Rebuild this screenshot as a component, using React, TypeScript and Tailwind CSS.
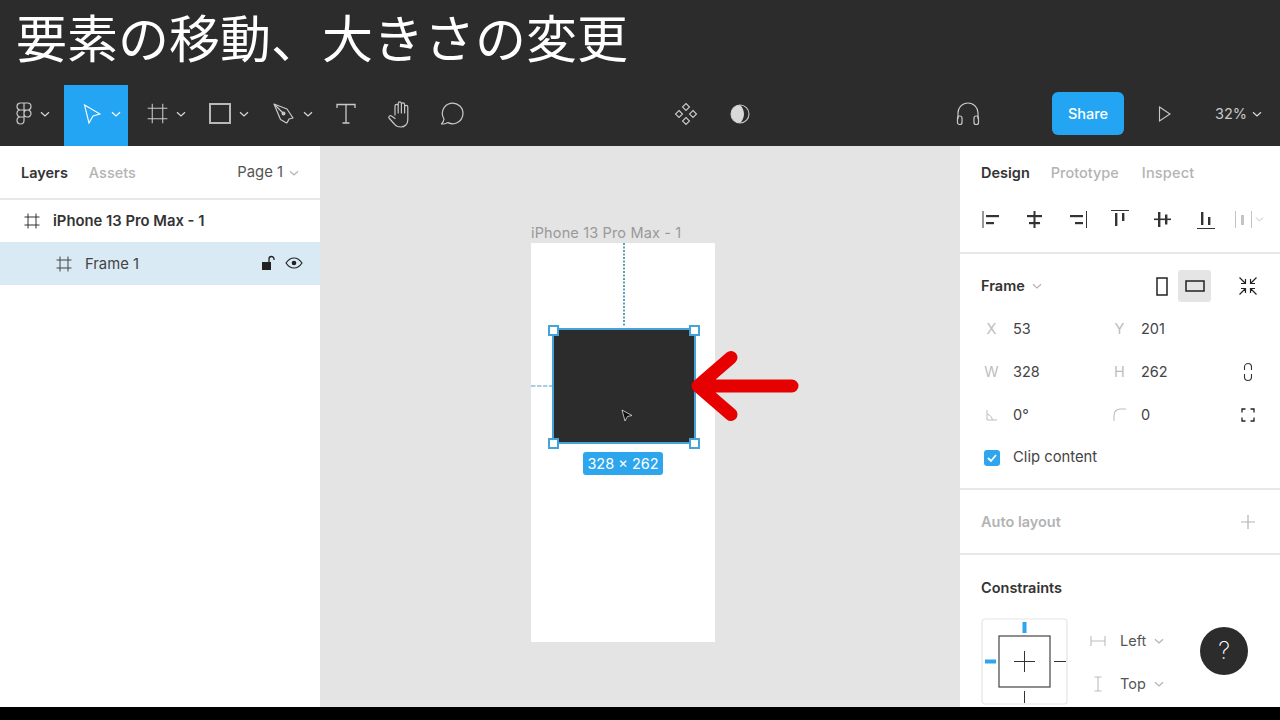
import React from 'react';

const Chevron = ({ className = 'text-[#d9d9d9]', size = 10 }: { className?: string; size?: number }) => (
  <svg width={size} height={size} viewBox="0 0 10 10" fill="none" stroke="currentColor" strokeWidth="1.2" className={className}>
    <path d="M1 3.2 5 7 9 3.2" />
  </svg>
);

const FrameGlyph = ({ size = 16, sw = 1 }: { size?: number; sw?: number }) => (
  <svg width={size} height={size} viewBox="0 0 16 16" fill="none" stroke="currentColor" strokeWidth={sw}>
    <path d="M4 0.5v15M12 0.5v15M0.5 4h15M0.5 12h15" />
  </svg>
);

const AlignIcons = () => (
  <svg width="284" height="24" viewBox="0 0 284 24" fill="none">
    <g fill="#333">
      {/* left */}
      <rect x="1.5" y="2" width="1" height="17" />
      <rect x="5" y="6" width="13" height="2.2" />
      <rect x="5" y="13" width="8" height="2.2" />
      {/* horizontal centers */}
      <rect x="52.5" y="2" width="2" height="17" />
      <rect x="46" y="6" width="15" height="2.2" />
      <rect x="48" y="13" width="11" height="2.2" />
      {/* right */}
      <rect x="105" y="2" width="1" height="17" />
      <rect x="89" y="6" width="13" height="2.2" />
      <rect x="94" y="13" width="8" height="2.2" />
      {/* top */}
      <rect x="130" y="1" width="18" height="1" />
      <rect x="134" y="4" width="2.4" height="13" />
      <rect x="141" y="4" width="2.4" height="8" />
      {/* vertical centers */}
      <rect x="173" y="9.5" width="17" height="1.6" />
      <rect x="177" y="3" width="2.4" height="15" />
      <rect x="184" y="5.5" width="2.4" height="10" />
      {/* bottom */}
      <rect x="216" y="19" width="18" height="1" />
      <rect x="220" y="3" width="2.4" height="13" />
      <rect x="227" y="8" width="2.4" height="8" />
    </g>
    {/* distribute */}
    <g fill="#c4c4c4">
      <rect x="254" y="2" width="1" height="17" />
      <rect x="270" y="2" width="1" height="17" />
      <rect x="260" y="6" width="3" height="10" />
    </g>
    <path d="M275 8.5l3.500 3.500 3.500-3.500" stroke="#c4c4c4" strokeWidth="1" />
  </svg>
);

const Row = ({ children }: { children: React.ReactNode }) => (
  <div className="flex h-[43px] items-center text-[14.5px] text-[#444]">{children}</div>
);

const Label = ({ children }: { children: React.ReactNode }) => (
  <span className="flex w-[32px] justify-center pr-px text-[#bdbdbd]">{children}</span>
);

const Handle = ({ className }: { className: string }) => (
  <div className={`absolute h-[11px] w-[11px] border-2 border-[#45a3da] bg-white ${className}`} />
);

export default function App() {
  return (
    <div className="flex h-[720px] w-[1280px] flex-col overflow-hidden bg-black font-['Inter',sans-serif]">
      {/* caption */}
      <div className="flex h-[85px] items-center bg-[#2c2c2c] pl-[16px] pb-[12px] font-['Noto_Sans_CJK_JP',sans-serif] text-[51px] leading-none text-white">
        要素の移動、大きさの変更
      </div>

      {/* toolbar */}
      <div className="flex h-[61px] items-center bg-[#2c2c2c] pb-[4px] text-[#c9c9c9]">
        <div className="flex h-full w-[64px] items-center gap-[8px] pl-[16px]">
          <svg width="16" height="24" viewBox="0 0 16 24" fill="none" stroke="currentColor" strokeWidth="1.2">
            <path d="M8 1H4.5a3.5 3.5 0 0 0 0 7H8zM8 1h3.5a3.5 3.5 0 0 1 0 7H8zM8 8H4.5a3.5 3.5 0 0 0 0 7H8zM8 11.5a3.5 3.5 0 1 0 7 0 3.5 3.5 0 0 0-7 0zM4.5 15H8v3.5A3.5 3.5 0 1 1 4.5 15z" />
          </svg>
          <Chevron />
        </div>
        <div className="-mb-[4px] flex h-[61px] w-[64px] items-center gap-[10px] bg-[#24a5f3] pb-[4px] pl-[19px] text-white">
          <svg width="18" height="22" viewBox="0 0 18 22" fill="none" stroke="currentColor" strokeWidth="1.1">
            <path d="M1.5 2 17 11l-7 2-4 7z" />
          </svg>
          <Chevron className="text-white" />
        </div>
        <div className="flex h-full w-[64px] items-center gap-[8px] pl-[19px]">
          <FrameGlyph size={21} sw={0.8} />
          <Chevron />
        </div>
        <div className="flex h-full w-[64px] items-center gap-[8px] pl-[17px]">
          <div className="h-[21px] w-[22px] border-2 border-[#b8b8b8]" />
          <Chevron />
        </div>
        <div className="flex h-full w-[62px] items-center gap-[8px] pl-[17px]">
          <svg width="22" height="24" viewBox="0 0 22 24" fill="none" stroke="currentColor" strokeWidth="1.2">
            <path d="M1 2 14 7l6 9-4 1-1.5 3-1 1-6-3.5z" strokeLinejoin="round" />
            <path d="M1.5 2.5 10 11" />
            <circle cx="10.5" cy="11.5" r="1.4" fill="currentColor" />
          </svg>
          <Chevron />
        </div>
        <div className="flex h-full w-[52px] items-center pl-[18px]">
          <svg width="20" height="24" viewBox="0 0 20 24" fill="none" stroke="currentColor" strokeWidth="1.3">
            <path d="M1 6V2.5h18V6M10 2.5v18M6.5 21h7" />
          </svg>
        </div>
        <div className="flex h-full w-[54px] items-center pl-[17px]">
          <svg width="26" height="28" viewBox="0 0 26 28" fill="none" stroke="currentColor" strokeWidth="1.2" strokeLinecap="round" strokeLinejoin="round">
            <path d="M8 15V6a1.6 1.6 0 0 1 3.2 0v7M11.2 13V3.5a1.6 1.6 0 0 1 3.2 0V13M14.4 13V4.5a1.6 1.6 0 0 1 3.2 0V13M17.6 13V7a1.6 1.6 0 0 1 3.2 0v13c0 4-3 7-7 7-3 0-5-1-6.5-3L2 18c-1-1.4 1-3 2.5-2L8 18.5" />
          </svg>
        </div>
        <div className="flex h-full items-center pl-[16px]">
          <svg width="25" height="24" viewBox="0 0 25 24" fill="none" stroke="currentColor" strokeWidth="1.2">
            <path d="M3.5 22h-2c1.500-1.500 2.300-3 2.500-5A10.300 10.300 0 1 1 8 20.600c-1.500.9-3 1.400-4.500 1.400z" strokeLinejoin="round" />
          </svg>
        </div>

        {/* center */}
        <div className="ml-[209px] flex items-center gap-[30px]">
          <svg width="24" height="24" viewBox="0 0 24 24" fill="none" stroke="currentColor" strokeWidth="1.1">
            <path d="M12 1.500 15.500 5 12 8.500 8.500 5zM5 8.500 8.500 12 5 15.500 1.500 12zM19 8.500 22.500 12 19 15.500 15.500 12zM12 15.500 15.500 19 12 22.500 8.500 19z" />
          </svg>
          <svg width="24" height="24" viewBox="0 0 24 24" fill="none" stroke="currentColor" strokeWidth="1.100">
            <circle cx="12" cy="12" r="9" />
            <path d="M12 3a9 9 0 0 0 0 18c2.500-2.200 4-5.400 4-9s-1.500-6.800-4-9z" fill="#d9d9d9" stroke="none" />
          </svg>
        </div>

        {/* right */}
        <svg width="26" height="26" viewBox="0 0 26 26" fill="none" stroke="currentColor" strokeWidth="1.2" className="ml-[203px]">
          <path d="M3 18v-6a10 10 0 0 1 20 0v6" />
          <rect x="2.500" y="15" width="4.500" height="8.500" rx="2" />
          <rect x="19" y="15" width="4.500" height="8.500" rx="2" />
        </svg>
        <div className="ml-[71px] flex h-[43px] w-[72px] items-center justify-center rounded-[6px] bg-[#24a5f3] text-[14.500px] font-medium text-white">
          Share
        </div>
        <svg width="16" height="18" viewBox="0 0 16 18" fill="none" stroke="currentColor" strokeWidth="1.1" className="ml-[33px]">
          <path d="M2.500 2 13 9 2.500 16z" />
        </svg>
        <span className="ml-[42px] text-[14.500px] text-[#c9c9c9]">32%</span>
        <Chevron className="ml-[5px] text-[#d9d9d9]" />
      </div>

      <div className="flex h-[561px]">
        {/* layers panel */}
        <div className="w-[320px] bg-white">
          <div className="flex h-[54px] items-center border-b-2 border-[#e8e8e8] px-[21px] pt-[1px] text-[14.500px]">
            <span className="font-semibold text-[#333]">Layers</span>
            <span className="ml-[21px] font-medium text-[#b3b3b3]">Assets</span>
            <span className="ml-auto text-[14.800px] text-[#555]">Page 1</span>
            <Chevron className="ml-[6px] text-[#b3b3b3]" />
          </div>
          <div className="flex h-[42px] items-center pl-[24px] text-[14.800px] font-semibold text-[#333]">
            <FrameGlyph />
            <span className="ml-[13px]">iPhone 13 Pro Max - 1</span>
          </div>
          <div className="flex h-[43px] items-center bg-[#daeaf5] pl-[56px] pr-[17px] text-[14.800px] text-[#444]">
            <FrameGlyph />
            <span className="ml-[13px] pt-[1px]">Frame 1</span>
            <svg width="16" height="16" viewBox="0 0 16 16" className="ml-auto -translate-y-px text-[#222]">
              <rect x="1" y="7" width="9" height="8" fill="currentColor" />
              <path d="M8 7V4a2.500 2.500 0 0 1 5 0v1" fill="none" stroke="currentColor" strokeWidth="1.300" />
            </svg>
            <svg width="18" height="12" viewBox="0 0 18 12" fill="none" stroke="#222" strokeWidth="1.200" className="ml-[8px] -translate-y-px">
              <path d="M1 6c2-3 5-5 8-5s6 2 8 5c-2 3-5 5-8 5s-6-2-8-5z" />
              <circle cx="9" cy="6" r="2.300" fill="#222" stroke="none" />
            </svg>
          </div>
        </div>

        {/* canvas */}
        <div className="relative w-[640px] bg-[#e4e4e4]">
          <span className="absolute left-[211px] top-[76px] text-[14.500px] tracking-[0.15px] text-[#999]">iPhone 13 Pro Max - 1</span>
          <div className="absolute left-[211px] top-[97px] h-[399px] w-[184px] bg-white">
            {/* measure guides */}
            <svg width="2" height="84" viewBox="0 0 2 84" className="absolute left-[92px] top-0">
              <path d="M1 0v84" stroke="#5f9fbd" strokeWidth="2" strokeDasharray="2 1.500" />
            </svg>
            <svg width="21" height="2" viewBox="0 0 21 2" className="absolute left-0 top-[142px]">
              <path d="M0 1h21" stroke="#4f9fc8" strokeWidth="1.200" strokeDasharray="4.500 1.500" />
            </svg>
            <div className="absolute left-[21px] top-[85px] flex h-[116px] w-[144px] items-end justify-center border-2 border-[#45a3da] bg-[#2c2c2c] pb-[20px]">
              <svg width="12" height="13" viewBox="0 0 12 13" className="ml-[5px]">
                <path d="M1 1 11 6.500 6.500 7.500 4 12z" fill="#111" stroke="#ddd" strokeWidth="0.800" />
              </svg>
            </div>
            <Handle className="left-[17px] top-[82px]" />
            <Handle className="left-[158px] top-[82px]" />
            <Handle className="left-[17px] top-[195px]" />
            <Handle className="left-[158px] top-[195px]" />
            <div className="absolute left-[52px] top-[209px] flex h-[23px] w-[80px] items-center justify-center rounded-[3px] bg-[#2ea6ee] text-[14.500px] text-white">
              328 × 262
            </div>
          </div>
          <svg width="112" height="72" viewBox="0 0 112 72" fill="none" stroke="#e60000" strokeWidth="13" strokeLinecap="round" strokeLinejoin="round" className="absolute left-[370px] top-[204px]">
            <path d="M8 36H102M41 7.500 8 36l33 28.500" />
          </svg>
        </div>

        {/* design panel */}
        <div className="relative w-[320px] bg-white">
          <div className="flex h-[108px] flex-col border-b-2 border-[#e8e8e8] pl-[21px]">
            <div className="flex h-[54px] items-center text-[14.500px]">
              <span className="font-semibold text-[#333]">Design</span>
              <span className="ml-[21px] font-medium text-[#b3b3b3]">Prototype</span>
              <span className="ml-[23px] font-medium tracking-[0.2px] text-[#b3b3b3]">Inspect</span>
            </div>
            <div className="mt-[9px]"><AlignIcons /></div>
          </div>

          <div className="h-[236px] border-b-2 border-[#e8e8e8]">
            <div className="flex h-[64px] items-center pl-[21px] pr-[22px]">
              <span className="text-[14.500px] font-semibold text-[#333]">Frame</span>
              <Chevron className="ml-[7px] text-[#b3b3b3]" />
              <div className="ml-auto flex items-center">
                <svg width="12" height="19" viewBox="0 0 12 19" fill="none" stroke="#222" strokeWidth="1.500">
                  <rect x="1" y="1" width="10" height="17" />
                </svg>
                <div className="ml-[10px] flex h-[32px] w-[33px] items-center justify-center rounded-[3px] bg-[#e5e5e5]">
                  <svg width="20" height="12" viewBox="0 0 20 12" fill="none" stroke="#222" strokeWidth="1.500">
                    <rect x="1" y="1" width="18" height="10" />
                  </svg>
                </div>
                <svg width="20" height="20" viewBox="0 0 20 20" fill="none" stroke="#222" strokeWidth="1.200" className="ml-[27px]">
                  <path d="M1.500 1.500 7.500 7.500M7.500 3v4.500H3M18.500 1.500 12.500 7.500M12.500 3v4.500H17M1.500 18.500 7.500 12.500M7.500 17v-4.500H3M18.500 18.500 12.500 12.500M12.500 17v-4.500H17" />
                </svg>
              </div>
            </div>
            <div className="-mt-[11px] pl-[16px] pr-[24px]">
              <Row>
                <Label>X</Label><span className="ml-[5px] w-[91px]">53</span>
                <Label>Y</Label><span className="ml-[5px]">201</span>
              </Row>
              <Row>
                <Label>W</Label><span className="ml-[5px] w-[91px]">328</span>
                <Label>H</Label><span className="ml-[5px]">262</span>
                <svg width="10" height="20" viewBox="0 0 10 20" fill="none" stroke="#333" strokeWidth="1.100" className="ml-auto mr-[3px]">
                  <path d="M1.500 8V5a3.500 3.500 0 0 1 7 0v3M1.500 12v3a3.500 3.500 0 0 0 7 0v-3" />
                </svg>
              </Row>
              <Row>
                <Label>
                  <svg width="12" height="12" viewBox="0 0 12 12" fill="none" stroke="#bdbdbd" strokeWidth="1">
                    <path d="M1 1v10h10M1 5c3 1 5 3 5.500 6" />
                  </svg>
                </Label>
                <span className="ml-[5px] w-[91px]">0°</span>
                <Label>
                  <svg width="13" height="13" viewBox="0 0 13 13" fill="none" stroke="#bdbdbd" strokeWidth="1.100">
                    <path d="M1 13V7a6 6 0 0 1 6-6h6" />
                  </svg>
                </Label>
                <span className="ml-[5px]">0</span>
                <svg width="14" height="14" viewBox="0 0 14 14" fill="none" stroke="#222" strokeWidth="1.300" className="ml-auto mr-[1px]">
                  <path d="M1 4.500V1h3.500M9.500 1H13v3.500M1 9.500V13h3.500M9.500 13H13V9.500" />
                </svg>
              </Row>
              <Row>
                <span className="ml-[8px] flex h-[16px] w-[16px] items-center justify-center rounded-[3px] bg-[#2ea6ee]">
                  <svg width="10" height="10" viewBox="0 0 10 10" fill="none" stroke="white" strokeWidth="1.800">
                    <path d="M1 5 4 8 9 2" />
                  </svg>
                </span>
                <span className="ml-[13px] text-[14.800px]">Clip content</span>
              </Row>
            </div>
          </div>

          <div className="flex h-[65px] items-center justify-between border-b-2 border-[#e8e8e8] pl-[21px] pr-[24px]">
            <span className="text-[14.500px] font-semibold text-[#b3b3b3]">Auto layout</span>
            <svg width="16" height="16" viewBox="0 0 16 16" stroke="#b3b3b3" strokeWidth="1.200">
              <path d="M8 1v14M1 8h14" />
            </svg>
          </div>

          <div className="pl-[21px] pt-[23px]">
            <span className="block text-[14.500px] leading-[20px] font-semibold text-[#333]">Constraints</span>
            <div className="mt-[20px] flex items-start">
              <svg width="87" height="87" viewBox="0 0 87 87" fill="none">
                <rect x="1" y="1" width="85" height="85" rx="3" stroke="#e5e5e5" strokeWidth="1.200" />
                <rect x="18" y="18" width="51" height="51" stroke="#444" strokeWidth="1.200" />
                <path d="M43.500 33v21M33 43.500h21M43.500 73v12M73 43.500h12" stroke="#333" strokeWidth="1" />
                <rect x="41.500" y="4" width="4" height="11" fill="#2ea6ee" />
                <rect x="4" y="41.500" width="11" height="4" fill="#2ea6ee" />
              </svg>
              <div className="ml-[22px] mt-[1px] text-[14.500px] text-[#555]">
                <div className="flex h-[43px] items-center">
                  <svg width="16" height="10" viewBox="0 0 16 10" fill="none" stroke="#bdbdbd" strokeWidth="1.100">
                    <path d="M1 0v10M15 0v10M1 5h14" />
                  </svg>
                  <span className="ml-[14px]">Left</span>
                  <Chevron className="ml-[8px] text-[#b3b3b3]" />
                </div>
                <div className="flex h-[43px] items-center">
                  <svg width="16" height="16" viewBox="0 0 16 16" fill="none" stroke="#bdbdbd" strokeWidth="1.100">
                    <path d="M4.500 1h7M4.500 15h7M8 1v14" />
                  </svg>
                  <span className="ml-[14px]">Top</span>
                  <Chevron className="ml-[8px] text-[#b3b3b3]" />
                </div>
              </div>
            </div>
          </div>

          <div className="absolute left-[240px] top-[481px] flex h-[48px] w-[48px] items-center justify-center rounded-full bg-[#2c2c2c] text-[24px] font-extralight text-white">
            ?
          </div>
        </div>
      </div>
    </div>
  );
}
